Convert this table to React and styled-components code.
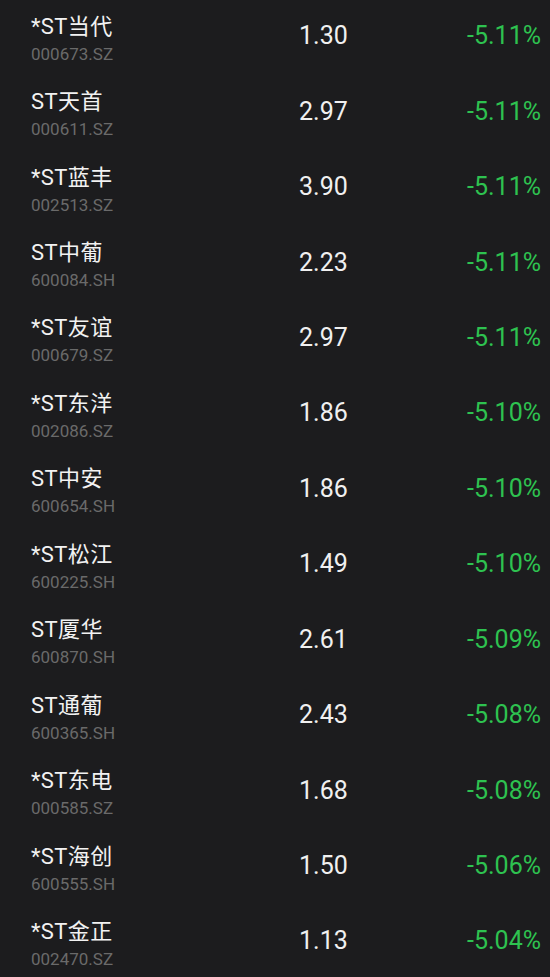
import React from 'react';
import styled, { createGlobalStyle } from 'styled-components';

const GlobalStyle = createGlobalStyle`
  html, body {
    margin: 0;
    padding: 0;
    background: #1c1c1e;
  }
  body {
    font-family: Roboto, 'Noto Sans CJK SC', sans-serif;
    -webkit-font-smoothing: antialiased;
  }
`;

const List = styled.div`
  width: 550px;
  height: 977px;
  overflow: hidden;
  background: #1c1c1e;
`;

const Rows = styled.div`
  margin-top: -2px;
`;

const Row = styled.div`
  display: grid;
  grid-template-columns: 268px 1fr auto;
  align-items: center;
  height: 75.45px;
  padding: 0 9px 0 31px;
  box-sizing: border-box;
`;

const NameBlock = styled.div`
  display: flex;
  flex-direction: column;
  gap: 4px;
  padding-top: 6px;
`;

const Name = styled.div`
  font-family: Roboto, 'Noto Sans CJK SC', sans-serif;
  font-size: 22px;
  line-height: 26px;
  letter-spacing: 0.4px;
  color: #f2f2f2;
  white-space: nowrap;
`;

const Code = styled.div`
  font-family: Roboto, sans-serif;
  font-size: 17px;
  line-height: 20px;
  color: #6a6a6a;
`;

const Price = styled.div`
  font-family: Roboto, sans-serif;
  font-size: 25px;
  color: #f0f0f0;
`;

const Change = styled.div`
  font-family: Roboto, sans-serif;
  font-size: 25px;
  color: ${(p) => (p.$down ? '#2ec250' : '#e94040')};
  text-align: right;
`;

const stocks = [
  { name: '*ST当代', code: '000673.SZ', price: '1.30', change: '-5.11%' },
  { name: 'ST天首', code: '000611.SZ', price: '2.97', change: '-5.11%' },
  { name: '*ST蓝丰', code: '002513.SZ', price: '3.90', change: '-5.11%' },
  { name: 'ST中葡', code: '600084.SH', price: '2.23', change: '-5.11%' },
  { name: '*ST友谊', code: '000679.SZ', price: '2.97', change: '-5.11%' },
  { name: '*ST东洋', code: '002086.SZ', price: '1.86', change: '-5.10%' },
  { name: 'ST中安', code: '600654.SH', price: '1.86', change: '-5.10%' },
  { name: '*ST松江', code: '600225.SH', price: '1.49', change: '-5.10%' },
  { name: 'ST厦华', code: '600870.SH', price: '2.61', change: '-5.09%' },
  { name: 'ST通葡', code: '600365.SH', price: '2.43', change: '-5.08%' },
  { name: '*ST东电', code: '000585.SZ', price: '1.68', change: '-5.08%' },
  { name: '*ST海创', code: '600555.SH', price: '1.50', change: '-5.06%' },
  { name: '*ST金正', code: '002470.SZ', price: '1.13', change: '-5.04%' },
];

export default function App() {
  return (
    <>
      <GlobalStyle />
      <List>
        <Rows>
          {stocks.map((s) => (
            <Row key={s.code}>
              <NameBlock>
                <Name>{s.name}</Name>
                <Code>{s.code}</Code>
              </NameBlock>
              <Price>{s.price}</Price>
              <Change $down={s.change.startsWith('-')}>{s.change}</Change>
            </Row>
          ))}
        </Rows>
      </List>
    </>
  );
}
